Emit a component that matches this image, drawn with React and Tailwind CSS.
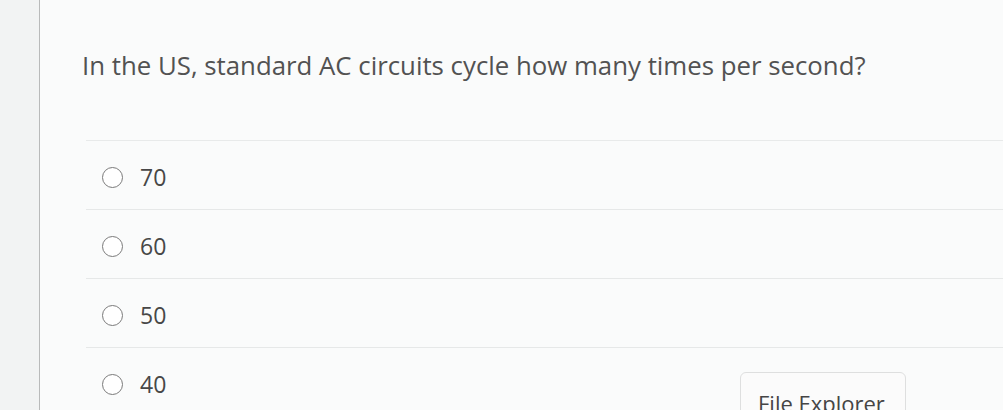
import React from 'react'

const OPTIONS = ['70', '60', '50', '40']

// ── Single radio option row ───────────────────────────────────────────────────

function Option({ label, last }) {
  return (
    <label
      className={
        'flex items-center h-[69px] pl-[16px] pt-[4px] gap-[17px] cursor-pointer ' +
        (last ? '' : 'border-b border-[#e6e8e8]')
      }
    >
      <span className="w-[21px] h-[21px] rounded-full border-[1.5px] border-[#7a7a7a] bg-white shrink-0" />
      <span className="text-[23px] text-[#474747] leading-none">{label}</span>
    </label>
  )
}

// ── App ───────────────────────────────────────────────────────────────────────

export default function App() {
  return (
    <div
      className="relative flex w-full h-[410px] overflow-hidden bg-[#fafbfb]"
      style={{ fontFamily: '"Open Sans", "Noto Sans", sans-serif' }}
    >
      {/* left rail */}
      <div className="w-[40px] shrink-0 bg-[#f2f3f3] border-r-[1.5px] border-[#b9baba]" />

      <main className="flex-1 min-w-0 pl-[42px]">
        <h1 className="pt-[48px] h-[140px] text-[25.8px] leading-[34px] text-[#525252] font-normal">
          In the US, standard AC circuits cycle how many times per second?
        </h1>

        <div className="ml-[4px] border-t border-[#e8eaea]">
          {OPTIONS.map((o, i) => (
            <Option key={o} label={o} last={i === OPTIONS.length - 1} />
          ))}
        </div>
      </main>

      {/* floating file explorer button */}
      <button className="absolute left-[740px] top-[372px] w-[166px] h-[52px] rounded-md border border-[#dedfdf] bg-[#fbfbfb] text-[22px] text-[#454545] text-left pl-[17px] pt-[9px] leading-none">
        File Explorer
      </button>
    </div>
  )
}
